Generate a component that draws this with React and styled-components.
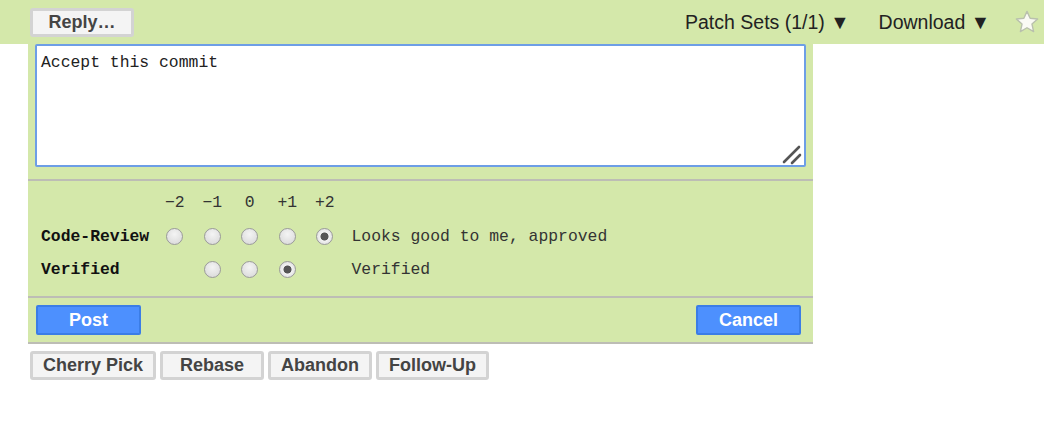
import React, { useState } from "react";
import styled, { createGlobalStyle } from "styled-components";

const GlobalStyle = createGlobalStyle`
  html, body {
    margin: 0;
    padding: 0;
    background: #ffffff;
    font-family: "Liberation Sans", Arial, sans-serif;
  }
`;

const GREEN = "#d4e8aa";

const labels = [
  {
    name: "Code-Review",
    values: ["-2", "-1", "0", "+1", "+2"],
    selected: "+2",
    text: "Looks good to me, approved",
  },
  {
    name: "Verified",
    values: ["-1", "0", "+1"],
    selected: "+1",
    text: "Verified",
  },
];

const scores = ["-2", "-1", "0", "+1", "+2"];

function Star() {
  return (
    <svg width="26" height="26" viewBox="0 0 24 24">
      <path
        d="M12 2.2l2.9 6.4 6.9.7-5.2 4.6 1.5 6.9L12 17.3l-6.1 3.5 1.5-6.9-5.2-4.6 6.9-.7z"
        fill="#fafaf4"
        stroke="#b9c0ad"
        strokeWidth="1.3"
        strokeLinejoin="round"
      />
    </svg>
  );
}

export default function App() {
  const [message, setMessage] = useState("Accept this commit");
  return (
    <>
      <GlobalStyle />
      <TopBar>
        <GreyButton>Reply…</GreyButton>
        <TopLinks>
          <TopLink>Patch Sets (1/1) ▼</TopLink>
          <TopLink>Download ▼</TopLink>
          <StarBox>
            <Star />
          </StarBox>
        </TopLinks>
      </TopBar>
      <Panel>
        <EditorWrap>
          <Editor value={message} onChange={(e) => setMessage(e.target.value)} />
          <Grip width="24" height="24" viewBox="0 0 24 24">
            <path d="M4 21L19 6" stroke="#555" strokeWidth="2.6" strokeLinecap="round" />
            <path d="M12 22l8-8" stroke="#555" strokeWidth="2.6" strokeLinecap="round" />
          </Grip>
        </EditorWrap>
        <Divider $gap={12} />
        <VoteGrid>
          <span />
          {scores.map((s) => (
            <ScoreHead key={s}>{s.replace("-", "−")}</ScoreHead>
          ))}
          <span />
          {labels.map((l) => (
            <React.Fragment key={l.name}>
              <LabelName>{l.name}</LabelName>
              {scores.map((s) => (
                <RadioCell key={s}>
                  {l.values.includes(s) && (
                    <Radio
                      type="radio"
                      name={l.name}
                      defaultChecked={s === l.selected}
                    />
                  )}
                </RadioCell>
              ))}
              <ValueText>{l.text}</ValueText>
            </React.Fragment>
          ))}
        </VoteGrid>
        <Divider $gap={0} />
        <ActionRow>
          <BlueButton>Post</BlueButton>
          <BlueButton>Cancel</BlueButton>
        </ActionRow>
        <Divider $gap={0} />
      </Panel>
      <ButtonRow>
        <GreyButton>Cherry Pick</GreyButton>
        <GreyButton>Rebase</GreyButton>
        <GreyButton>Abandon</GreyButton>
        <GreyButton>Follow-Up</GreyButton>
      </ButtonRow>
    </>
  );
}

const TopBar = styled.div`
  display: flex;
  align-items: center;
  justify-content: space-between;
  width: calc(100% - 4px);
  height: 44px;
  box-sizing: border-box;
  padding: 0 0 0 30px;
  background: ${GREEN};
`;

const TopLinks = styled.div`
  display: flex;
  align-items: center;
  height: 100%;
`;

const TopLink = styled.span`
  font-size: 19.5px;
  color: #222;
  margin-left: 29px;
  white-space: nowrap;
  cursor: pointer;
`;

const StarBox = styled.span`
  display: flex;
  margin: 0 4px 0 24px;
`;

const GreyButton = styled.button`
  display: inline-flex;
  align-items: center;
  justify-content: center;
  box-sizing: border-box;
  height: 29px;
  min-width: 104px;
  padding: 0 10px;
  background: #f4f4f4;
  border: 3px solid #d3d3d3;
  border-radius: 3px;
  font-family: "Liberation Sans", Arial, sans-serif;
  font-weight: bold;
  font-size: 18px;
  color: #444;
  cursor: pointer;
`;

const Panel = styled.div`
  width: 785px;
  margin-left: 28px;
  background: ${GREEN};
  display: flex;
  flex-direction: column;
`;

const EditorWrap = styled.div`
  position: relative;
  margin: 0 7px;
  height: 123px;
`;

const Editor = styled.textarea`
  display: block;
  width: 100%;
  height: 100%;
  box-sizing: border-box;
  border: 2px solid #6d9ee6;
  border-radius: 2px;
  padding: 7px 4px 6px;
  resize: none;
  outline: none;
  background: #fff;
  font-family: "Liberation Mono", "Courier New", monospace;
  font-size: 16.4px;
  color: #222;
`;

const Grip = styled.svg`
  position: absolute;
  right: 2px;
  bottom: 2px;
  pointer-events: none;
`;

const Divider = styled.div`
  height: 2px;
  background: #bdbdb5;
  margin-top: ${({ $gap }) => $gap}px;
`;

const VoteGrid = styled.div`
  display: grid;
  grid-template-columns: 115px repeat(5, 37.5px) 1fr;
  grid-auto-rows: 33px;
  align-items: center;
  padding: 6px 0 10px 13px;
  font-family: "Liberation Mono", "Courier New", monospace;
  font-size: 16.4px;
  color: #333;
`;

const ScoreHead = styled.span`
  text-align: center;
  transform: translateY(-1px);
`;

const LabelName = styled.span`
  font-weight: bold;
  color: #111;
`;

const RadioCell = styled.span`
  display: flex;
  justify-content: center;
`;

const Radio = styled.input`
  appearance: none;
  margin: 0;
  width: 17px;
  height: 17px;
  border-radius: 50%;
  border: 1px solid #9a9a9a;
  background: radial-gradient(circle at 50% 35%, #f4f4f4 0%, #d6d6d6 100%);
  box-sizing: border-box;
  cursor: pointer;
  &:checked {
    background: radial-gradient(circle, #555 0 3.6px, #f2f2f2 4.4px, #d6d6d6 100%);
  }
`;

const ValueText = styled.span`
  padding-left: 8px;
  white-space: nowrap;
`;

const ActionRow = styled.div`
  display: flex;
  justify-content: space-between;
  align-items: center;
  padding: 7px 12px 7px 8px;
`;

const BlueButton = styled.button`
  box-sizing: border-box;
  width: 105px;
  height: 30px;
  background: #4d90fe;
  border: 2px solid #3b7de6;
  border-radius: 2px;
  color: #fff;
  font-family: "Liberation Sans", Arial, sans-serif;
  font-weight: bold;
  font-size: 18px;
  cursor: pointer;
`;

const ButtonRow = styled.div`
  display: flex;
  gap: 4px;
  padding: 7px 0 0 30px;
`;
